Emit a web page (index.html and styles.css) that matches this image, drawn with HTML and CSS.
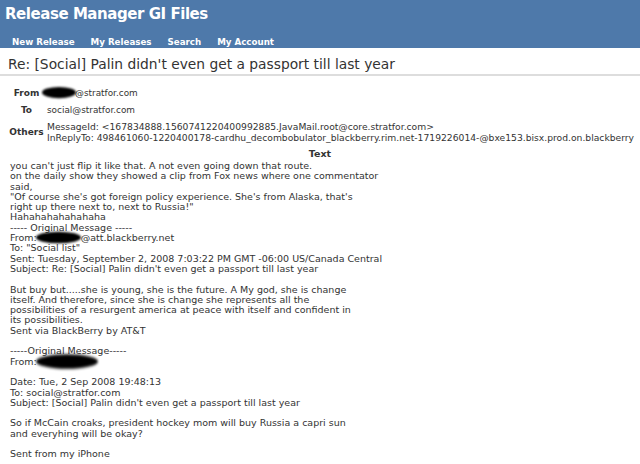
FILE: index.html
```html
<!DOCTYPE html>
<html lang="en">
<head>
  <meta charset="UTF-8">
  <title>Release Manager GI Files</title>
  <link rel="stylesheet" href="styles.css">
</head>
<body>
  <!-- Cabecera azul -->
  <div class="header">
    <div class="site-title">Release Manager GI Files</div>
    <div class="nav">
      <a href="#">New Release</a>
      <a href="#">My Releases</a>
      <a href="#">Search</a>
      <a href="#">My Account</a>
    </div>
  </div>

  <h1 class="subject">Re: [Social] Palin didn't even get a passport till last year</h1>

  <table class="meta">
    <tr>
      <th>From</th>
      <td><span class="redact redact-from"></span>@stratfor.com</td>
    </tr>
    <tr>
      <th>To</th>
      <td>social@stratfor.com</td>
    </tr>
    <tr class="others-row">
      <th>Others</th>
      <td class="others">MessageId: &lt;167834888.1560741220400992885.JavaMail.root@core.stratfor.com&gt;<br>InReplyTo: 498461060-1220400178-cardhu_decombobulator_blackberry.rim.net-1719226014-@bxe153.bisx.prod.on.blackberry</td>
    </tr>
    <tr>
      <th colspan="2" class="text-head">Text</th>
    </tr>
  </table>

  <div class="body-text">you can't just flip it like that. A not even going down that route.
on the daily show they showed a clip from Fox news where one commentator
said,
"Of course she's got foreign policy experience. She's from Alaska, that's
right up there next to, next to Russia!"
Hahahahahahahaha
----- Original Message -----
From: <span class="redact redact-a"></span>@att.blackberry.net
To: "Social list"
Sent: Tuesday, September 2, 2008 7:03:22 PM GMT -06:00 US/Canada Central
Subject: Re: [Social] Palin didn't even get a passport till last year

But buy but.....she is young, she is the future. A My god, she is change
itself. And therefore, since she is change she represents all the
possibilities of a resurgent america at peace with itself and confident in
its possibilities.
Sent via BlackBerry by AT&amp;T

-----Original Message-----
From: <span class="redact redact-b"></span>

Date: Tue, 2 Sep 2008 19:48:13
To: social@stratfor.com
Subject: [Social] Palin didn't even get a passport till last year

So if McCain croaks, president hockey mom will buy Russia a capri sun
and everyhing will be okay?

Sent from my iPhone</div>
</body>
</html>
```

FILE: styles.css
```css
/* Estilo global */
html, body {
  margin: 0;
  padding: 0;
  background-color: #fff;
  color: #333;
  font-family: "DejaVu Sans", Verdana, sans-serif;
  overflow: hidden;
}

/* Cabecera */
.header {
  background-color: #4e79aa;
  height: 48px;
}
.site-title {
  color: #fff;
  font-size: 15px;
  font-weight: bold;
  letter-spacing: -0.45px;
  padding: 4px 0 0 5px;
  height: 28px;
  line-height: 20px;
}
.nav {
  display: flex;
  gap: 16px;
  padding: 3px 0 0 12px;
}
.nav a {
  color: #fff;
  font-size: 8.7px;
  font-weight: bold;
  text-decoration: none;
  line-height: 14px;
}

/* Titulo del mensaje */
.subject {
  font-size: 13.8px;
  font-weight: normal;
  margin: 0;
  padding: 9px 0 3px 8px;
  border-bottom: 2px solid #ddd;
  line-height: 14px;
}

/* Tabla de cabeceras */
.meta {
  width: 100%;
  border-collapse: collapse;
  margin-top: 9px;
}
.meta th {
  font-size: 9px;
  font-weight: bold;
  width: 37px;
  padding: 3px 0 3px 8px;
  text-align: center;
  line-height: 11px;
}
.meta td {
  font-size: 8.9px;
  padding: 3px 0 3px 2px;
  line-height: 11px;
  white-space: nowrap;
}
.meta .others-row th,
.meta td.others {
  padding-top: 3px;
  padding-bottom: 5px;
}
.meta td.others {
  font-size: 9.2px;
  line-height: 10.5px;
}
.meta th.text-head {
  text-align: center;
  padding: 0;
  font-size: 9.5px;
}

/* Cuerpo del mensaje */
.body-text {
  white-space: pre-wrap;
  font-size: 9.5px;
  line-height: 10.3px;
  padding: 2px 10px 0;
}

/* Tachones negros */
.redact {
  display: inline-block;
  background: #000;
  border-radius: 50%;
  filter: blur(1px);
  vertical-align: -1px;
  height: 9px;
}
.redact-from {
  width: 34px;
  transform: scaleY(1.25);
  margin-left: -5px;
  margin-right: -1px;
}
.redact-a {
  width: 45px;
  transform: scaleY(1.3);
  margin-left: -4px;
}
.redact-b {
  width: 62px;
  transform: scaleY(1.6);
  margin-left: -4px;
}
```
